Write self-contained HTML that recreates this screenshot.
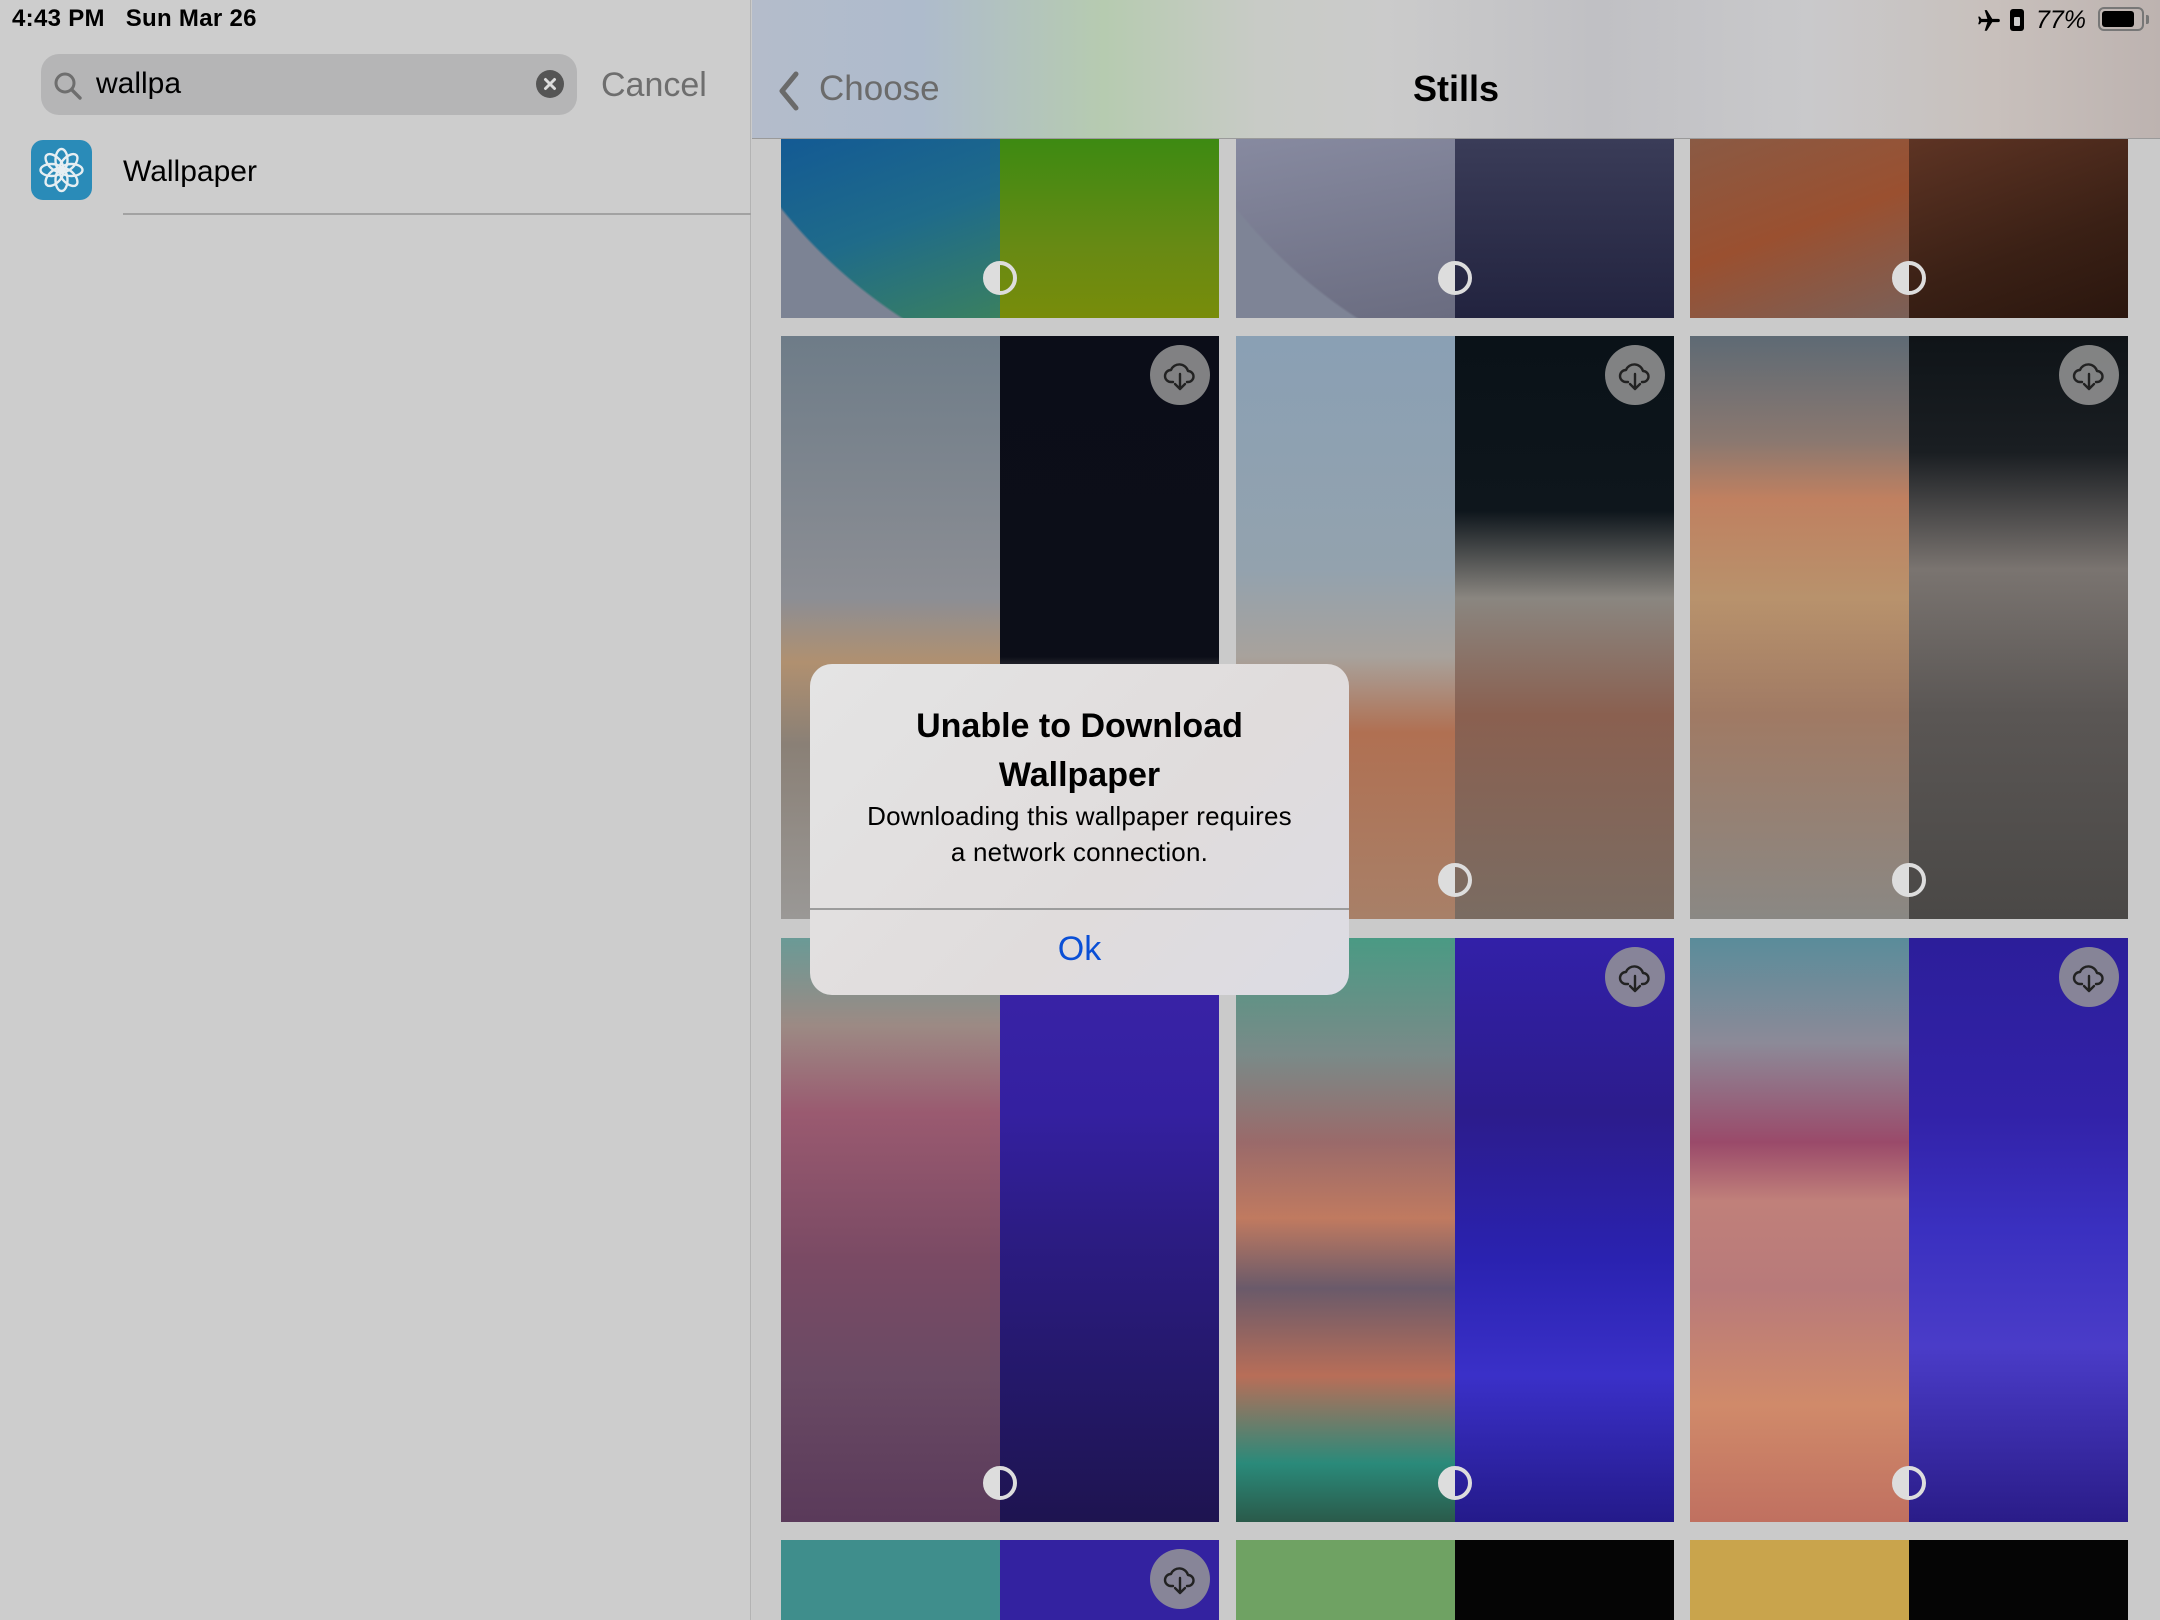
<!DOCTYPE html>
<html><head><meta charset="utf-8">
<style>
*{margin:0;padding:0;box-sizing:border-box}
body{width:2160px;height:1620px;overflow:hidden;background:#cbcbcb;font-family:"Liberation Sans",sans-serif;position:relative}
.abs{position:absolute}
.left{left:0;top:0;width:751px;height:1620px;background:#cdcdcd;border-right:1px solid #b3b3b3}
.tile{position:absolute;overflow:hidden}
.tile .l,.tile .r{position:absolute;top:0;bottom:0;width:50%}
.tile .l{left:0}.tile .r{right:0}
.half{position:absolute;width:34px;height:34px;border-radius:50%;border:4px solid #ddd;left:50%;margin-left:-17px;background:linear-gradient(90deg,#ddd 50%,transparent 50%);z-index:2}
.cloud{position:absolute;width:60px;height:60px;border-radius:50%;background:rgba(150,150,150,.85)}
.cloud svg{position:absolute;left:12px;top:12px}
</style></head><body>

<div class="abs" style="left:752px;top:0;width:1408px;height:1620px;background:#cacaca"></div>

<!-- row1 -->
<div class="tile" style="left:781px;top:139px;width:438px;height:179px">
 <div class="l" style="background:linear-gradient(160deg,#135a94,#1f6b8a 50%,#3a8060)"></div>
 <div class="r" style="background:linear-gradient(180deg,#3d8a12,#678a14 60%,#788c0a)"></div>
 <div class="abs" style="left:0;top:0;width:438px;height:179px;background:radial-gradient(circle 513px at 400px -250px,transparent 99.5%,#7c8394 100%)"></div>
 <div class="half" style="top:122px"></div>
</div>
<div class="tile" style="left:1236px;top:139px;width:438px;height:179px">
 <div class="l" style="background:linear-gradient(170deg,#878aa0,#6a6c80)"></div>
 <div class="r" style="background:linear-gradient(180deg,#3a3c58,#22233f)"></div>
 <div class="abs" style="left:0;top:0;width:438px;height:179px;background:radial-gradient(circle 513px at 400px -250px,transparent 99.5%,#7e8496 100%)"></div>
 <div class="half" style="top:122px"></div>
</div>
<div class="tile" style="left:1690px;top:139px;width:438px;height:179px">
 <div class="l" style="background:linear-gradient(160deg,#8a5a44,#9a5030 50%,#7a6058)"></div>
 <div class="r" style="background:linear-gradient(160deg,#5e3424,#3a2015 60%,#2a160e)"></div>
 <div class="half" style="top:122px"></div>
</div>

<!-- row2 -->
<div class="tile" style="left:781px;top:336px;width:438px;height:583px">
 <div class="l" style="background:linear-gradient(180deg,#6e7c88 0%,#8c8e94 45%,#b09070 56%,#8a8076 70%,#9a9896 100%)"></div>
 <div class="r" style="background:linear-gradient(180deg,#0b0d18 0%,#0c0e18 55%,#7a7a78 62%,#6e6e6c 100%)"></div>
 <div class="cloud" style="left:369px;top:9px"><svg width="36" height="36" viewBox="0 0 36 36" fill="none" stroke="#222" stroke-width="2.4" stroke-linecap="round" stroke-linejoin="round"><path d="M11 25H9a6 6 0 0 1 0-12 9 9 0 0 1 17 1 5.5 5.5 0 0 1 0 11h-1"/><path d="M18 17v15M13 27l5 5 5-5"/></svg></div>
</div>
<div class="tile" style="left:1236px;top:336px;width:438px;height:583px">
 <div class="l" style="background:linear-gradient(180deg,#8aa0b4 0%,#93a2ae 40%,#a8a29c 55%,#b07052 68%,#a88068 100%)"></div>
 <div class="r" style="background:linear-gradient(180deg,#0a1218 0%,#0e161c 30%,#8a8680 45%,#8a6050 65%,#7a6c62 100%)"></div>
 <div class="cloud" style="left:369px;top:9px"><svg width="36" height="36" viewBox="0 0 36 36" fill="none" stroke="#222" stroke-width="2.4" stroke-linecap="round" stroke-linejoin="round"><path d="M11 25H9a6 6 0 0 1 0-12 9 9 0 0 1 17 1 5.5 5.5 0 0 1 0 11h-1"/><path d="M18 17v15M13 27l5 5 5-5"/></svg></div>
 <div class="half" style="top:527px"></div>
</div>
<div class="tile" style="left:1690px;top:336px;width:438px;height:583px">
 <div class="l" style="background:linear-gradient(180deg,#5e6a74 0%,#8a7870 18%,#c08060 28%,#b8926c 45%,#a07a64 65%,#8a8884 100%)"></div>
 <div class="r" style="background:linear-gradient(180deg,#0f1418 0%,#1a1e22 20%,#7a7470 40%,#5a5654 65%,#4a4846 100%)"></div>
 <div class="cloud" style="left:369px;top:9px"><svg width="36" height="36" viewBox="0 0 36 36" fill="none" stroke="#222" stroke-width="2.4" stroke-linecap="round" stroke-linejoin="round"><path d="M11 25H9a6 6 0 0 1 0-12 9 9 0 0 1 17 1 5.5 5.5 0 0 1 0 11h-1"/><path d="M18 17v15M13 27l5 5 5-5"/></svg></div>
 <div class="half" style="top:527px"></div>
</div>

<!-- row3 -->
<div class="tile" style="left:781px;top:938px;width:438px;height:584px">
 <div class="l" style="background:linear-gradient(180deg,#6a9a96 0%,#9c8a84 15%,#9a5a70 30%,#7a4a64 55%,#6a4a64 75%,#5a3a5a 100%)"></div>
 <div class="r" style="background:linear-gradient(180deg,#3a24a8 0%,#3420a0 30%,#2c1c84 50%,#24186a 75%,#1e1450 100%)"></div>
 <div class="half" style="top:528px"></div>
</div>
<div class="tile" style="left:1236px;top:938px;width:438px;height:584px">
 <div class="l" style="background:linear-gradient(180deg,#4a9a84 0%,#7a8a88 20%,#9a6a6a 35%,#c07a60 48%,#6a5a6a 60%,#b86e58 75%,#2a8a7a 90%,#2a5a4a 100%)"></div>
 <div class="r" style="background:linear-gradient(180deg,#3220a8 0%,#2c1c8c 30%,#2a22b0 55%,#3a30c8 75%,#241a8a 100%)"></div>
 <div class="cloud" style="left:369px;top:9px"><svg width="36" height="36" viewBox="0 0 36 36" fill="none" stroke="#222" stroke-width="2.4" stroke-linecap="round" stroke-linejoin="round"><path d="M11 25H9a6 6 0 0 1 0-12 9 9 0 0 1 17 1 5.5 5.5 0 0 1 0 11h-1"/><path d="M18 17v15M13 27l5 5 5-5"/></svg></div>
 <div class="half" style="top:528px"></div>
</div>
<div class="tile" style="left:1690px;top:938px;width:438px;height:584px">
 <div class="l" style="background:linear-gradient(180deg,#5a8c9a 0%,#8c8a98 18%,#9a4a6a 35%,#c0807a 45%,#b87a7a 60%,#d08a6a 80%,#c07060 100%)"></div>
 <div class="r" style="background:linear-gradient(180deg,#2c1e9a 0%,#3222a8 30%,#3a30c0 50%,#4a3cc8 70%,#2a1c88 100%)"></div>
 <div class="cloud" style="left:369px;top:9px"><svg width="36" height="36" viewBox="0 0 36 36" fill="none" stroke="#222" stroke-width="2.4" stroke-linecap="round" stroke-linejoin="round"><path d="M11 25H9a6 6 0 0 1 0-12 9 9 0 0 1 17 1 5.5 5.5 0 0 1 0 11h-1"/><path d="M18 17v15M13 27l5 5 5-5"/></svg></div>
 <div class="half" style="top:528px"></div>
</div>

<!-- row4 -->
<div class="tile" style="left:781px;top:1540px;width:438px;height:80px">
 <div class="l" style="background:#3f8e8c"></div><div class="r" style="background:#3322a0"></div>
 <div class="cloud" style="left:369px;top:9px"><svg width="36" height="36" viewBox="0 0 36 36" fill="none" stroke="#222" stroke-width="2.4" stroke-linecap="round" stroke-linejoin="round"><path d="M11 25H9a6 6 0 0 1 0-12 9 9 0 0 1 17 1 5.5 5.5 0 0 1 0 11h-1"/><path d="M18 17v15M13 27l5 5 5-5"/></svg></div>
</div>
<div class="tile" style="left:1236px;top:1540px;width:438px;height:80px">
 <div class="l" style="background:#6fa263"></div><div class="r" style="background:#050505"></div>
</div>
<div class="tile" style="left:1690px;top:1540px;width:438px;height:80px">
 <div class="l" style="background:#c9a44c"></div><div class="r" style="background:#050505"></div>
</div>

<!-- header -->
<div class="abs" style="left:752px;top:0;width:1408px;height:139px;background:linear-gradient(90deg,#b4bccb 0%,#aebbcc 12%,#b6cbb0 25%,#c8cbc6 36%,#cbcbcb 45%,#c0c0c4 60%,#c9c9cb 75%,#c8c0bc 88%,#bdb3b0 100%);border-bottom:1px solid #9a9a9a"></div>
<svg class="abs" style="left:776px;top:70px" width="26" height="42" viewBox="0 0 26 42"><path d="M20 4 6 21l14 17" fill="none" stroke="#6a6a6a" stroke-width="5" stroke-linecap="round" stroke-linejoin="round"/></svg>
<div class="abs" style="left:819px;top:69px;font-size:35px;color:#6b6b6b">Choose</div>
<div class="abs" style="left:1413px;top:68px;font-size:36px;font-weight:bold;color:#000">Stills</div>
<svg class="abs" style="left:1976px;top:8px" width="26" height="26" viewBox="0 0 24 24"><path d="M21 16v-2l-8-5V3.5a1.5 1.5 0 0 0-3 0V9l-8 5v2l8-2.5V19l-2 1.5V22l3.5-1 3.5 1v-1.5L13 19v-5.5z" fill="#000" transform="rotate(90 12 12)"/></svg>
<div class="abs" style="left:2010px;top:9px;width:14px;height:22px;background:#000;border-radius:3px"><div style="position:absolute;left:4px;top:8px;width:6px;height:9px;background:#ccc;border-radius:1px"></div></div>
<div class="abs" style="left:2036px;top:6px;font-size:25px;color:#000;font-style:italic">77%</div>
<div class="abs" style="left:2098px;top:7px;width:46px;height:24px;border:2px solid #777;border-radius:6px"><div style="position:absolute;left:2px;top:2px;width:32px;height:16px;background:#000;border-radius:3px"></div></div>
<div class="abs" style="left:2146px;top:15px;width:3px;height:9px;background:#777;border-radius:0 2px 2px 0"></div>

<!-- left pane -->
<div class="abs left"></div>
<div class="abs" style="left:12px;top:5px;font-size:24px;font-weight:bold;color:#000;letter-spacing:.3px">4:43 PM&nbsp;&nbsp;&nbsp;Sun Mar 26</div>
<div class="abs" style="left:41px;top:54px;width:536px;height:61px;background:#b5b5b6;border-radius:18px"></div>
<svg class="abs" style="left:52px;top:70px" width="32" height="32" viewBox="0 0 32 32"><circle cx="13" cy="13" r="9" fill="none" stroke="#6e6e6e" stroke-width="3"/><path d="M20 20l8 8" stroke="#6e6e6e" stroke-width="3.4" stroke-linecap="round"/></svg>
<div class="abs" style="left:96px;top:67px;font-size:30px;color:#000">wallpa</div>
<div class="abs" style="left:536px;top:70px;width:28px;height:28px;border-radius:50%;background:#555"><svg width="28" height="28" viewBox="0 0 28 28"><path d="M9.5 9.5l9 9M18.5 9.5l-9 9" stroke="#ddd" stroke-width="3" stroke-linecap="round"/></svg></div>
<div class="abs" style="left:601px;top:66px;font-size:34px;color:#6e6e6e">Cancel</div>
<div class="abs" style="left:31px;top:140px;width:61px;height:60px;border-radius:12px;background:#2a8bb8">
<svg width="61" height="60" viewBox="0 0 61 60" fill="none" stroke="#e6eef2" stroke-width="2.4"><g transform="translate(30.5 30)"><ellipse rx="6" ry="11" cy="-10"/><ellipse rx="6" ry="11" cy="-10" transform="rotate(45)"/><ellipse rx="6" ry="11" cy="-10" transform="rotate(90)"/><ellipse rx="6" ry="11" cy="-10" transform="rotate(135)"/><ellipse rx="6" ry="11" cy="-10" transform="rotate(180)"/><ellipse rx="6" ry="11" cy="-10" transform="rotate(225)"/><ellipse rx="6" ry="11" cy="-10" transform="rotate(270)"/><ellipse rx="6" ry="11" cy="-10" transform="rotate(315)"/></g></svg></div>
<div class="abs" style="left:123px;top:155px;font-size:30px;color:#000">Wallpaper</div>
<div class="abs" style="left:123px;top:213px;width:628px;height:2px;background:#a2a2a2"></div>

<!-- dialog -->
<div class="abs" style="left:810px;top:664px;width:539px;height:331px;border-radius:22px;background:linear-gradient(135deg,#e4e4e4,#e0dcdc 60%,#dcdce4);overflow:hidden">
 <div style="position:absolute;left:0;right:0;top:38px;text-align:center;font-size:34px;font-weight:bold;line-height:49px;color:#000">Unable to Download<br>Wallpaper</div>
 <div style="position:absolute;left:0;right:0;top:134px;text-align:center;font-size:26px;line-height:36px;color:#000;letter-spacing:.2px">Downloading this wallpaper requires<br>a network connection.</div>
 <div style="position:absolute;left:0;right:0;top:244px;height:2px;background:#9c9c9c"></div>
 <div style="position:absolute;left:0;right:0;top:266px;text-align:center;font-size:34px;color:#0a4fd6">Ok</div>
</div>
</body></html>
